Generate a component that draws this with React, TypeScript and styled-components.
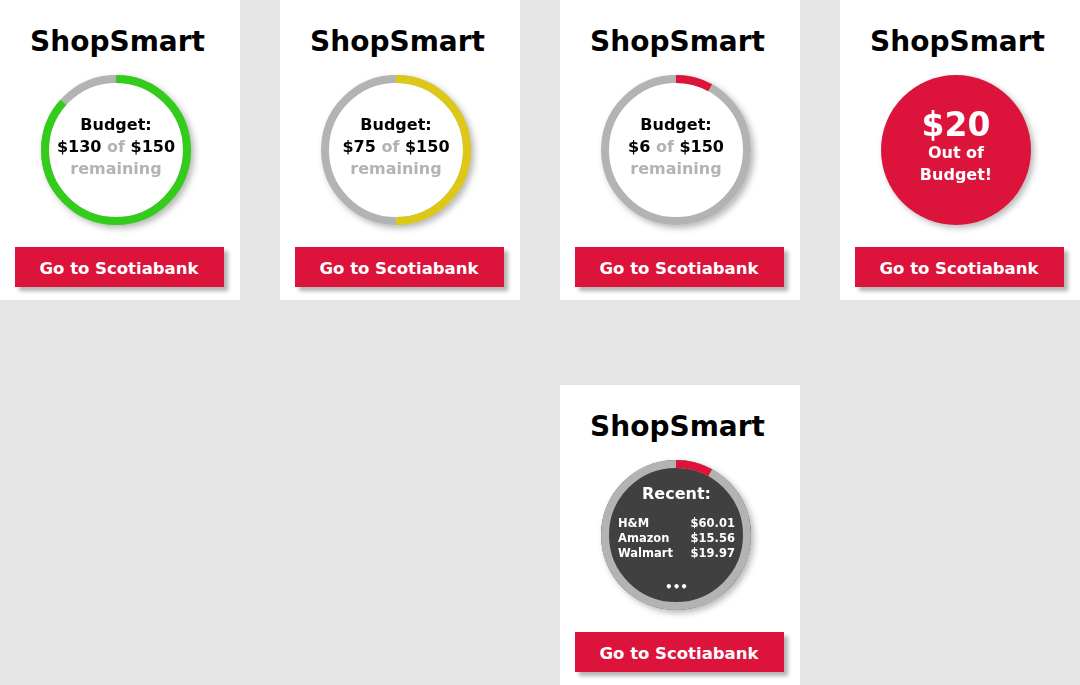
import React from "react";
import styled, { createGlobalStyle } from "styled-components";

const Global = createGlobalStyle`
  html, body { margin: 0; padding: 0; background: #e5e5e5; }
  body { font-family: "DejaVu Sans", "Open Sans", sans-serif; }
`;

const RED = "#dc143c";
const GRAY = "#b3b3b3";

const Board = styled.div`
  display: grid;
  grid-template-columns: repeat(4, 240px);
  grid-auto-rows: 300px;
  column-gap: 40px;
  row-gap: 85px;
  width: 1080px;
  height: 685px;
  overflow: hidden;
`;

const Card = styled.div<{ $col?: number }>`
  background: #fff;
  display: flex;
  flex-direction: column;
  align-items: center;
  padding-top: 25px;
  box-sizing: border-box;
  ${(p) => (p.$col ? `grid-column: ${p.$col};` : "")}
`;

const Title = styled.h1`
  margin: 0 5px 0 0;
  font-size: 28px;
  line-height: 34px;
  font-weight: 700;
  color: #000;
`;

const Dial = styled.div<{ $fill?: string }>`
  position: relative;
  width: 150px;
  height: 150px;
  margin: 16px 8px 0 0;
  border-radius: 50%;
  background: ${(p) => p.$fill || "transparent"};
  filter: drop-shadow(3px 3px 3px rgba(0, 0, 0, 0.28));
  display: flex;
  flex-direction: column;
  align-items: center;
  justify-content: center;
  box-sizing: border-box;
`;

const Ring = styled.svg`
  position: absolute;
  inset: 0;
`;

const DialText = styled.div`
  position: relative;
  text-align: center;
  font-weight: 700;
  font-size: 16px;
  line-height: 22px;
  color: #000;
  margin-top: -6px;
`;

const Muted = styled.span`
  color: ${GRAY};
`;

const Big = styled.div`
  position: relative;
  color: #fff;
  font-weight: 700;
  font-size: 33px;
  line-height: 34px;
  margin-top: -6px;
`;

const Over = styled.div`
  position: relative;
  color: #fff;
  font-weight: 700;
  font-size: 16px;
  line-height: 22px;
  text-align: center;
`;

const Recent = styled.div`
  position: relative;
  width: 100%;
  padding: 24px 16px 0 17px;
  box-sizing: border-box;
  align-self: stretch;
  height: 100%;
  color: #fff;
  font-weight: 700;
`;

const RecentHead = styled.div`
  text-align: center;
  font-size: 16px;
  line-height: 20px;
  margin-bottom: 12px;
`;

const Row = styled.div`
  display: flex;
  justify-content: space-between;
  font-size: 11.5px;
  line-height: 15px;
`;

const More = styled.div`
  text-align: center;
  font-size: 12px;
  line-height: 12px;
  margin-top: 20px;
`;

const Button = styled.button`
  margin: 22px 2px 0 0;
  width: 209px;
  height: 40px;
  border: none;
  background: ${RED};
  color: #fff;
  font-family: inherit;
  font-weight: 700;
  font-size: 16.5px;
  box-shadow: 4px 4px 4px rgba(0, 0, 0, 0.3);
  padding: 2px 0 0 0;
`;

const R = 71;

function RingArc({ color, pct, track }: { color: string; pct: number; track: string }) {
  return (
    <Ring width="150" height="150" viewBox="0 0 150 150">
      <circle cx="75" cy="75" r={R} fill="none" stroke={track} strokeWidth="8" />
      <circle
        cx="75"
        cy="75"
        r={R}
        fill="none"
        stroke={color}
        strokeWidth="8"
        pathLength={100}
        strokeDasharray={`${pct} ${100 - pct}`}
        transform="rotate(-90 75 75)"
      />
    </Ring>
  );
}

function BudgetCard({ left, color, pct }: { left: string; color: string; pct: number }) {
  return (
    <Card>
      <Title>ShopSmart</Title>
      <Dial $fill="#fff">
        <RingArc color={color} pct={pct} track={GRAY} />
        <DialText>
          Budget:
          <br />
          {left} <Muted>of</Muted> $150
          <br />
          <Muted>remaining</Muted>
        </DialText>
      </Dial>
      <Button>Go to Scotiabank</Button>
    </Card>
  );
}

const purchases = [
  ["H&M", "$60.01"],
  ["Amazon", "$15.56"],
  ["Walmart", "$19.97"],
];

export default function App() {
  return (
    <>
      <Global />
      <Board>
        <BudgetCard left="$130" color="#33cc1a" pct={86.7} />
        <BudgetCard left="$75" color="#dec817" pct={50} />
        <BudgetCard left="$6" color={RED} pct={8} />
        <Card>
          <Title>ShopSmart</Title>
          <Dial $fill={RED}>
            <Big>$20</Big>
            <Over>
              Out of
              <br />
              Budget!
            </Over>
          </Dial>
          <Button>Go to Scotiabank</Button>
        </Card>
        <Card $col={3}>
          <Title>ShopSmart</Title>
          <Dial $fill="#404040">
            <RingArc color={RED} pct={8} track={GRAY} />
            <Recent>
              <RecentHead>Recent:</RecentHead>
              {purchases.map(([n, v]) => (
                <Row key={n}>
                  <span>{n}</span>
                  <span>{v}</span>
                </Row>
              ))}
              <More>•••</More>
            </Recent>
          </Dial>
          <Button>Go to Scotiabank</Button>
        </Card>
      </Board>
    </>
  );
}
